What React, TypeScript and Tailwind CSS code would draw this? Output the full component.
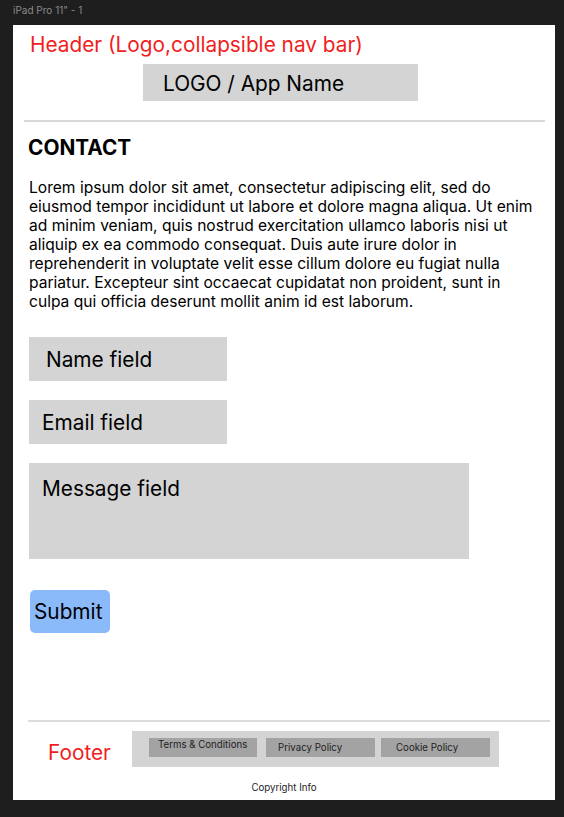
export default function App() {
  const font = "font-['Inter',_'Noto_Sans',_sans-serif]";

  return (
    <div className={`h-[817px] w-full bg-[#1e1e1e] ${font}`}>
      {/* Canvas frame label */}
      <div className="h-[25px] pl-[13px] pt-[4px] text-[10px] leading-[12px] text-[#8a8a8a]">
        iPad Pro 11&quot; - 1
      </div>

      {/* Frame */}
      <div className="ml-[13px] flex h-[775px] w-[542px] flex-col bg-white">
        {/* Header */}
        <div className="ml-[17px] mt-[7px] text-[20.8px] leading-[25px] text-[#f01e1e]">
          Header (Logo,collapsible nav bar)
        </div>
        <div className="ml-[130px] mt-[7px] flex h-[37px] w-[275px] items-center bg-[#d4d4d4] pl-[20px] pt-[2px] text-[20.8px] leading-[25px] text-black">
          LOGO / App Name
        </div>
        <div className="ml-[11px] mt-[19px] h-[2px] w-[521px] bg-[#d9d9d9]" />

        {/* Content */}
        <h1 className="ml-[15px] mt-[13px] text-[20.8px] font-bold leading-[25px] text-black">CONTACT</h1>
        <p className="ml-[16px] mt-[18px] w-[512px] text-[15.6px] leading-[19px] text-black">
          Lorem ipsum dolor sit amet, consectetur adipiscing elit, sed do eiusmod tempor incididunt ut labore et
          dolore magna aliqua. Ut enim ad minim veniam, quis nostrud exercitation ullamco laboris nisi ut aliquip ex
          ea commodo consequat. Duis aute irure dolor in reprehenderit in voluptate velit esse cillum dolore eu fugiat
          nulla pariatur. Excepteur sint occaecat cupidatat non proident, sunt in culpa qui officia deserunt mollit
          anim id est laborum.
        </p>

        {/* Form */}
        <div className="ml-[16px] mt-[26px] flex h-[44px] w-[198px] items-center bg-[#d4d4d4] pl-[17px] text-[20.8px] leading-[25px] text-black">
          Name field
        </div>
        <div className="ml-[16px] mt-[19px] flex h-[44px] w-[198px] items-center bg-[#d4d4d4] pl-[13px] text-[20.8px] leading-[25px] text-black">
          Email field
        </div>
        <div className="ml-[16px] mt-[19px] h-[96px] w-[440px] bg-[#d4d4d4] pl-[13px] pt-[13px] text-[20.8px] leading-[25px] text-black">
          Message field
        </div>
        <button className="ml-[17px] mt-[31px] flex h-[43px] w-[80px] items-center rounded-[5px] bg-[#8bbafb] pl-[4px] text-left text-[20.8px] leading-[25px] text-black">
          Submit
        </button>

        {/* Footer */}
        <div className="ml-[15px] mt-[87px] h-[2px] w-[522px] bg-[#dcdcdc]" />
        <div className="mt-[9px] flex items-start">
          <div className="ml-[35px] mt-[9px] w-[84px] text-[20.8px] leading-[25px] text-[#f01e1e]">Footer</div>
          <div className="flex h-[36px] w-[367px] items-start bg-[#d4d4d4] pl-[17px] pt-[7px] text-[9.7px] leading-[12px] text-[#1e1e1e]">
            <div className="h-[19px] w-[108px] bg-[#a3a3a3] pl-[9px] pt-[1px]">Terms &amp; Conditions</div>
            <div className="ml-[9px] flex h-[19px] w-[109px] items-center bg-[#a3a3a3] pl-[12px]">Privacy Policy</div>
            <div className="ml-[6px] flex h-[19px] w-[109px] items-center bg-[#a3a3a3] pl-[15px]">Cookie Policy</div>
          </div>
        </div>
        <div className="mt-[15px] text-center text-[9.7px] leading-[12px] text-[#1e1e1e]">Copyright Info</div>
      </div>
    </div>
  );
}
